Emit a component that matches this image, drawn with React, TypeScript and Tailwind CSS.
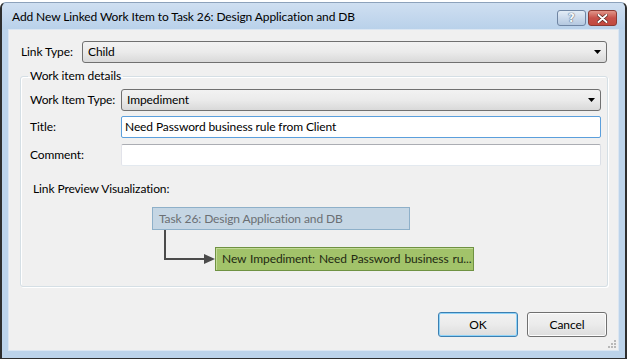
const font = { fontFamily: "Lato, 'Noto Sans', sans-serif" };

function Combo({ value, width }: { value: string; width: string }) {
  return (
    <div
      className={`${width} h-[22px] flex items-center justify-between rounded-[3px] border border-[#707070] bg-gradient-to-b from-[#f2f2f2] via-[#ebebeb] to-[#d9d9d9] pl-[5px] pr-[5px] text-[12px] text-black`}
    >
      <span>{value}</span>
      <svg width="7" height="4" viewBox="0 0 7 4">
        <polygon points="0,0 7,0 3.5,4" fill="#000" />
      </svg>
    </div>
  );
}

function Row({ label, className, children }: { label: string; className?: string; children: React.ReactNode }) {
  return (
    <div className={`flex items-center ${className ?? ""}`}>
      <span className="w-[91px] text-[12px] text-black">{label}</span>
      {children}
    </div>
  );
}

export default function App() {
  return (
    <div className="w-[628px] h-[362px] bg-white overflow-hidden tracking-[-0.1px]" style={font}>
      <div className="mt-[2px] w-[627px] h-[357px] flex flex-col rounded-t-[6px] border-x-2 border-b border-t border-x-[#2e2e2e] border-b-[#2e2e2e] border-t-[#8da2bb] bg-[#bcd3ea]">
        {/* Title bar */}
        <div className="h-[26px] flex items-center justify-between pl-[10px] pr-[8px] bg-gradient-to-b from-[#cfdff1] to-[#b9d1ea] rounded-t-[5px]">
          <span className="text-[12px] text-black mt-[1px]">Add New Linked Work Item to Task 26: Design Application and DB</span>
          <div className="flex gap-[2px] mt-[4px]">
            <div className="w-[29px] h-[16px] rounded-[3px] border border-[#6f85a3] bg-gradient-to-b from-[#e3ecf6] to-[#b4c8e0] flex items-center justify-center">
              <span className="text-[12px] font-bold text-[#f4f7fb] leading-none" style={{ fontFamily: "'DejaVu Sans', sans-serif", textShadow: "0 0 1px #3f5269, 0 0 1px #3f5269" }}>?</span>
            </div>
            <div className="w-[29px] h-[16px] rounded-[3px] border border-[#8c3a33] bg-gradient-to-b from-[#e1958a] via-[#c7514a] to-[#c24a3f] flex items-center justify-center">
              <svg width="11" height="9" viewBox="0 0 11 9">
                <path d="M1.5 1 L9.5 8 M9.5 1 L1.5 8" stroke="#4a1a15" strokeWidth="3.2" strokeLinecap="round" />
                <path d="M1.5 1 L9.5 8 M9.5 1 L1.5 8" stroke="#fff" strokeWidth="2" strokeLinecap="round" />
              </svg>
            </div>
          </div>
        </div>

        {/* Client area */}
        <div className="relative mx-[6px] mb-[7px] flex-1 flex flex-col border border-[#dbe6f2] bg-[#f0f0f0] px-[10px] pt-[11px]">
          <div className="flex items-center">
            <span className="w-[63px] pl-[2px] text-[12px] text-black">Link Type:</span>
            <Combo value="Child" width="w-[525px]" />
          </div>

          <fieldset className="mt-[5px] ml-[1px] w-[588px] rounded-[3px] border border-[#d5dfe5] pl-[9px] pr-[5px] pb-[15px] shadow-[inset_1px_1px_0_#fff,1px_1px_0_#fff]">
            <legend className="ml-[-2px] px-[2px] text-[12px] text-black leading-[16px]">Work item details</legend>
            <div className="mt-[5px] flex flex-col">
              <Row label="Work Item Type:">
                <Combo value="Impediment" width="w-[480px]" />
              </Row>
              <Row label="Title:" className="mt-[5px]">
                <div className="w-[480px] h-[22px] flex items-center rounded-[2px] border border-[#5b9fdc] bg-white px-[3px] text-[12px] text-black">
                  Need Password business rule from Client
                </div>
              </Row>
              <Row label="Comment:" className="mt-[6px]">
                <div className="w-[480px] h-[22px] rounded-[2px] border border-[#abadb3] border-l-[#e2e3ea] border-b-[#e3e9ef] border-r-[#dbdfe6] bg-white" />
              </Row>
            </div>

            <div className="mt-[14px] ml-[3px] text-[12px] text-black">Link Preview Visualization:</div>

            <div className="mt-[9px] ml-[122px] flex flex-col">
              <div className="w-[258px] h-[23px] flex items-center border border-[#8eb0c9] bg-[#c5d6e4] px-[6px] text-[12px] text-[#6b6f73]">
                Task 26: Design Application and DB
              </div>
              <div className="flex">
                <svg width="63" height="41" viewBox="0 0 63 41" className="shrink-0">
                  <path d="M13 0 V29 H53" fill="none" stroke="#4b4b4b" strokeWidth="2" />
                  <polygon points="52,24 63,29 52,34" fill="#4b4b4b" />
                </svg>
                <div className="mt-[17px] w-[259px] h-[24px] flex items-center border border-[#6f9242] bg-[#a2c36a] px-[6px] text-[12px] text-[#1f2a12] shadow-[inset_1px_1px_0_#c3da98] [word-spacing:1px] whitespace-nowrap overflow-hidden">
                  New Impediment: Need Password business ru...
                </div>
              </div>
            </div>
          </fieldset>

          <div className="mt-[25px] flex justify-end gap-[9px] pr-[1px]">
            <button className="w-[80px] h-[25px] rounded-[3px] border border-[#3c7fb1] bg-gradient-to-b from-[#f2f2f2] via-[#ebebeb] to-[#dddddd] text-[12px] text-black shadow-[inset_0_0_0_1px_#8fd3f8]">
              OK
            </button>
            <button className="w-[80px] h-[25px] rounded-[3px] border border-[#707070] bg-gradient-to-b from-[#f2f2f2] via-[#ebebeb] to-[#dddddd] text-[12px] text-black shadow-[inset_0_0_0_1px_#fcfcfc]">
              Cancel
            </button>
          </div>

          {/* resize grip */}
          <svg width="8" height="8" viewBox="0 0 8 8" className="absolute right-[2px] bottom-[2px]">
            {[[6, 0], [3, 3], [6, 3], [0, 6], [3, 6], [6, 6]].map(([x, y], i) => (
              <rect key={i} x={x} y={y} width="2" height="2" fill="#b8b8b8" />
            ))}
          </svg>
        </div>
      </div>
    </div>
  );
}
